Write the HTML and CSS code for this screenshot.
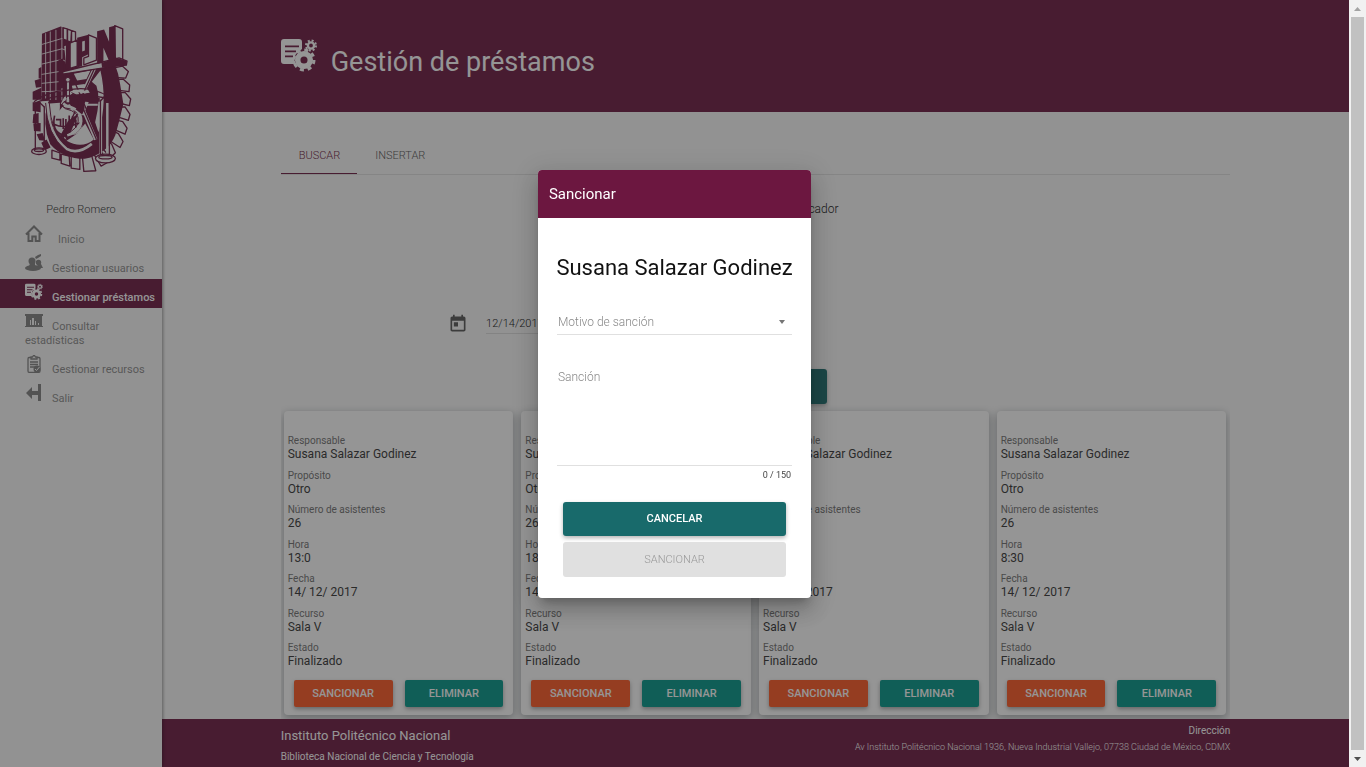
FILE: index.html
```html
<!DOCTYPE html>
<html lang="es">
<head>
<meta charset="utf-8">
<title>Gestión de préstamos</title>
<link rel="stylesheet" href="styles.css">
</head>
<body>
<svg width="0" height="0" class="defs" aria-hidden="true">
  <symbol id="manage" viewBox="0 0 36 34">
    <path fill="currentColor" fill-rule="evenodd" d="M3 0h15q3 0 3 3v7l-6 5-2 5 2 5H3q-3 0-3-3V3q0-3 3-3zM4 6.500v1.800h14V6.500zM4 11.500v1.800h11v-1.800zM4 16.500v1.800h8v-1.800z"/>
    <circle cx="23" cy="21" r="6.300" fill="none" stroke="currentColor" stroke-width="5.500"/>
    <circle cx="23" cy="21" r="10" fill="none" stroke="currentColor" stroke-width="3" stroke-dasharray="4 3.850"/>
    <circle cx="30" cy="6.500" r="3.100" fill="none" stroke="currentColor" stroke-width="2.400"/>
    <circle cx="30" cy="6.500" r="5" fill="none" stroke="currentColor" stroke-width="2" stroke-dasharray="2 1.930"/>
  </symbol>
</svg>
<div class="app">
  <aside class="sidebar">
    <svg class="logo" viewBox="90 70 310 450" role="img" aria-label="IPN">
      <g fill="#fafafa" stroke="currentColor" stroke-width="4" stroke-linejoin="round">
        <path d="M340 205l28-6 18 16-8 20-32-2zM346 240l24-2 20 18-2 20-30-4zM352 280l24-2 17 20-4 20-32-8zM350 322l26 0 15 22-5 18-32-10zM345 360l24 6 13 20-6 18-32-14zM334 392l22 10 14 24-9 18-28-18zM318 420l18 14 11 26-14 14-22-24z"/>
        <path d="M156 452l24 8 0 22-24-6zM184 464l24 6 2 30-26-8zM214 470l26 2 0 38-26-4zM248 474l28-4 12 44-36 2zM282 464l22-10 18 36-18 10z"/>
      </g>
      <path fill="currentColor" d="M116 206l8-4v34h-8zM104 242l20-6v26l-16 2zM98 276l26-12v36h-26zM98 308l24-2v32l-24-4zM100 344l16-4v32l-18-2zM100 372l22-2v26l-20-2zM110 404l18-4 8 24-18-2zM124 430l16-10 12 24-18 8z"/>
      <path fill="currentColor" d="M190 205L345 192q12 30 16 60l10 60-12 50-12 44q-22 56-92 72-66 0-104-44-26-60-7-124z"/>
      <g fill="#fafafa">
        <path d="M222 222l50-10-12 26-28 4zM302 212q22 94-6 186l-10-30q18-70 4-110l-14-12z"/>
        <path d="M216 258l38-5 16 26-48 6zM140 312l40-3v14q-8 55 20 98-46-28-60-109zM250 312h44v6h-44zM232 402l24-30 26 48q-36 30-82 4z"/>
        <path d="M190 318l20-4 12 20 20 16q18 40-16 55-40 8-66-20-4-40 20-54z"/>
      </g>
      <g fill="none">
        <path stroke="#fafafa" stroke-width="10" d="M284 206l-28 58M250 330l38 90M262 306l-16 40"/>
        <path stroke="currentColor" stroke-width="4" d="M215 225l76 176M284 206l-94 209M248 322l42 98"/>
        <path stroke="currentColor" stroke-width="5" d="M164 348q-10 46 24 58 44 6 62-38M164 375q20 10 50 3t34-12M168 360h14v20m8-24v32m8-30v24m10-34v40m10-38v24M228 360v24"/>
      </g>
      <path fill="currentColor" d="M178 415l26-50 32-24-28 68zM126 102l56-22 44 15v32l-33 12 7 72-14 90-62 4z"/>
      <path fill="none" stroke="#fafafa" stroke-width="2.500" d="M137 100v198M151 95v206M168 90v211M186 82v220M125 134l61-18 15 4M125 163l61-16 15 5M125 193l61-14 10 5M125 224l61-10M125 251l61-6M125 276l61-2"/>
      <g fill="#fafafa" stroke="currentColor" stroke-width="4" stroke-linejoin="round">
        <path d="M190 84l12 3 0 35-12-4zM203 88l12 4-2 35-10-4zM215 92l12 4 0 32-12 0z"/>
        <path d="M210 130l22-9v78l-22 7zM266 105l24 10v66l-38 14v-20l14-5zM345 77l24 10v94l-22 2z"/>
        <path d="M188 216l170-42 24 10-2 12-34 3-158 24z"/>
      </g>
      <path fill="currentColor" d="M198 132l14-5v78l-14 4zM232 114l34-9v58l-19 9v27l-15 4zM292 94l21-5 15 37V82l19-5v104l-18 5-18-42v45l-19 4z"/>
      <path fill="#fafafa" d="M247 125l8-2v29l-8 3z"/>
      <path fill="currentColor" d="M350 174l31 10v12l-34 4-40 4-2-14zM176 180l14-4v88l-14 4z"/>
      <g fill="none">
        <path stroke="#fafafa" stroke-width="8" d="M204 240v68M142 310q2 93 58 138 34 19 76-15M258 278q-40-14-62 17l-8 15 16 11q40 8 40 43-2 34-42 43M303 310v160M323 310v160"/>
        <path stroke="currentColor" stroke-width="3" d="M200 230v66M209 230v68M137 310q3 96 60 142M148 310q4 90 55 132M196 304q-18 10 0 23 44 10 39 38-1 22-35 38M180 316q16 12 32 12"/>
        <path stroke="currentColor" stroke-width="4" d="M102 306q40-31 98-34 70-16 125 18M108 309q50-22 96-20 60-6 116 6M106 320v132M133 320v135M302 300v166M329 300v168"/>
        <path stroke="currentColor" stroke-width="4" d="M106 322l12-14 15 14M302 304l13-14 15 16"/>
        <circle cx="204" cy="240" r="7" fill="#fafafa" stroke="currentColor" stroke-width="3"/>
      </g>
      <path fill="currentColor" d="M212 276q60 24 35 69l-20-16q22-20-15-53zM256 294h44v12h-44z"/>
      <g fill="#fafafa" stroke="currentColor" stroke-width="4">
        <ellipse cx="117" cy="455" rx="22" ry="10"/><ellipse cx="117" cy="452" rx="14" ry="4"/>
        <ellipse cx="317" cy="477" rx="30" ry="13"/><ellipse cx="317" cy="473" rx="20" ry="5"/>
      </g>
    </svg>
    <p class="user">Pedro Romero</p>
    <nav class="menu">
      <a class="home" href="#"><svg viewBox="0 0 18 18"><path fill="none" stroke="currentColor" stroke-width="2" d="M1 9.500L9 1.500l8 8M3.500 8v8h3.800v-4.500h3.400V16h3.800V8"/></svg>Inicio</a>
      <a href="#"><svg viewBox="0 0 18 18"><g fill="currentColor"><circle cx="7" cy="7" r="3.500"/><ellipse cx="8" cy="14" rx="8" ry="3"/><path d="M5 9h5v4H4z"/><circle cx="13.500" cy="8.500" r="2.700"/><path d="M12 10h4l2 4h-5zM10 3l3-2 3-1v2l-3 2-2 1z"/></g></svg>Gestionar usuarios</a>
      <a class="active" href="#"><svg viewBox="0 0 36 34"><use href="#manage"/></svg>Gestionar préstamos</a>
      <a href="#"><svg viewBox="0 0 18 18"><path fill="currentColor" fill-rule="evenodd" d="M0 2h18v2h-1v10h1v1H0v-1h1V4H0zM5 8v5h1V8zM7 6v7h2V6zM10 9v4h1V9zM13 11v2h1v-2z"/></svg>Consultar estadísticas</a>
      <a href="#"><svg viewBox="0 0 18 18"><path fill="none" stroke="currentColor" stroke-width="1.300" d="M6 2.500H4Q3 2.500 3 4v12q0 1.300 1 1.300h10q1 0 1-1.300V4q0-1.500-1-1.500h-2M6 4V2h1.500l1-1.500h1L10.500 2H12v2zM5 7h8M5 9.500h8M5 12h5"/><circle cx="12" cy="14" r="3.500" fill="currentColor"/><path fill="none" stroke="#fff" d="M10 14l1.500 1.500 3-3.500"/></svg>Gestionar recursos</a>
      <a href="#"><svg viewBox="0 0 18 18"><path fill="currentColor" d="M1 9l6-6v4h6v4H7v4zM13 0h3v17h-3z"/></svg>Salir</a>
    </nav>
  </aside>
  <div class="main">
    <header class="banner"><svg viewBox="0 0 36 34" aria-hidden="true"><use href="#manage"/></svg><h1>Gestión de préstamos</h1></header>
    <main class="content">
      <div class="tabs"><button class="tab selected" type="button">BUSCAR</button><button class="tab" type="button">INSERTAR</button></div>
      <p class="search-label">Identificador</p>
      <div class="date">
        <svg viewBox="0 0 24 24" aria-hidden="true"><path fill="currentColor" d="M19 3h-1V1h-2v2H8V1H6v2H5c-1.100 0-2 .9-2 2v14c0 1.100.9 2 2 2h14c1.100 0 2-.9 2-2V5c0-1.100-.9-2-2-2zm0 16H5V8h14v11zM7 10h5v5H7z"/></svg>
        <input type="text" value="12/14/2017" aria-label="Fecha">
      </div>
      <button class="find" type="button" aria-label="Buscar"></button>
      <div class="cards">
        <article class="card">
          <dl>
            <div><dt>Responsable</dt><dd>Susana Salazar Godinez</dd></div>
            <div><dt>Propósito</dt><dd>Otro</dd></div>
            <div><dt>Número de asistentes</dt><dd>26</dd></div>
            <div><dt>Hora</dt><dd>13:0</dd></div>
            <div><dt>Fecha</dt><dd>14/ 12/ 2017</dd></div>
            <div><dt>Recurso</dt><dd>Sala V</dd></div>
            <div><dt>Estado</dt><dd>Finalizado</dd></div>
          </dl>
          <div class="actions"><button class="orange" type="button">SANCIONAR</button><button class="teal" type="button">ELIMINAR</button></div>
        </article>
        <article class="card">
          <dl>
            <div><dt>Responsable</dt><dd>Susana Salazar Godinez</dd></div>
            <div><dt>Propósito</dt><dd>Otro</dd></div>
            <div><dt>Número de asistentes</dt><dd>26</dd></div>
            <div><dt>Hora</dt><dd>18</dd></div>
            <div><dt>Fecha</dt><dd>14/ 12/ 2017</dd></div>
            <div><dt>Recurso</dt><dd>Sala V</dd></div>
            <div><dt>Estado</dt><dd>Finalizado</dd></div>
          </dl>
          <div class="actions"><button class="orange" type="button">SANCIONAR</button><button class="teal" type="button">ELIMINAR</button></div>
        </article>
        <article class="card">
          <dl>
            <div><dt>Responsable</dt><dd>Susana Salazar Godinez</dd></div>
            <div><dt>Propósito</dt><dd>Otro</dd></div>
            <div><dt>Número de asistentes</dt><dd>26</dd></div>
            <div><dt>Hora</dt><dd>8:30</dd></div>
            <div><dt>Fecha</dt><dd>14/ 12/ 2017</dd></div>
            <div><dt>Recurso</dt><dd>Sala V</dd></div>
            <div><dt>Estado</dt><dd>Finalizado</dd></div>
          </dl>
          <div class="actions"><button class="orange" type="button">SANCIONAR</button><button class="teal" type="button">ELIMINAR</button></div>
        </article>
        <article class="card">
          <dl>
            <div><dt>Responsable</dt><dd>Susana Salazar Godinez</dd></div>
            <div><dt>Propósito</dt><dd>Otro</dd></div>
            <div><dt>Número de asistentes</dt><dd>26</dd></div>
            <div><dt>Hora</dt><dd>8:30</dd></div>
            <div><dt>Fecha</dt><dd>14/ 12/ 2017</dd></div>
            <div><dt>Recurso</dt><dd>Sala V</dd></div>
            <div><dt>Estado</dt><dd>Finalizado</dd></div>
          </dl>
          <div class="actions"><button class="orange" type="button">SANCIONAR</button><button class="teal" type="button">ELIMINAR</button></div>
        </article>
      </div>
    </main>
    <footer class="footer">
      <div><p class="school">Instituto Politécnico Nacional</p><p class="library">Biblioteca Nacional de Ciencia y Tecnología</p></div>
      <div class="address"><p class="heading">Dirección</p><p>Av Instituto Politécnico Nacional 1936, Nueva Industrial Vallejo, 07738 Ciudad de México, CDMX</p></div>
    </footer>
  </div>
  <div class="scrollbar" aria-hidden="true">
    <svg class="up" viewBox="0 0 17 17"><path d="M5 11h7L8.500 7z"/></svg>
    <div class="thumb"></div>
    <svg class="down" viewBox="0 0 17 17"><path d="M5 7h7l-3.500 4z"/></svg>
  </div>
</div>
<div class="backdrop">
  <form class="dialog" role="dialog" aria-labelledby="dialog-title">
    <h2 id="dialog-title">Sancionar</h2>
    <div class="dialog-body">
      <p class="person">Susana Salazar Godinez</p>
      <div class="select">
        <select aria-label="Motivo de sanción"><option>Motivo de sanción</option></select>
        <svg viewBox="0 0 8 4" aria-hidden="true"><path fill="#757575" d="M1 0h6L4 4z"/></svg>
      </div>
      <textarea placeholder="Sanción" aria-label="Sanción" maxlength="150"></textarea>
      <p class="counter">0 / 150</p>
      <div class="dialog-actions">
        <button class="cancel" type="button">CANCELAR</button>
        <button class="submit" type="submit" disabled>SANCIONAR</button>
      </div>
    </div>
  </form>
</div>
</body>
</html>
```
FILE: styles.css
```css
* { box-sizing: border-box; }
body, h1, h2, p, dl, dd { margin: 0; }
body {
  font-family: Roboto, "Liberation Sans", sans-serif;
  font-size: 12px;
  font-weight: 300;
  color: #111;
  background: #fafafa;
}
button, input, select, textarea { font: inherit; color: inherit; border: 0; border-radius: 0; background: none; padding: 0; margin: 0; }
button { cursor: pointer; }
.defs { display: block; }

.app { display: flex; height: 100vh; overflow: hidden; }

/* Sidebar */
.sidebar { width: 162px; flex: none; background: #fafafa; box-shadow: 1px 0 3px rgba(0,0,0,.4); z-index: 1; }
.logo { display: block; width: 103px; height: 150px; margin: 23px 0 0 30px; color: #6c1740; }
.user { margin-top: 29px; text-align: center; font-size: 11px; line-height: 16px; color: #333; }
.menu { margin-top: 3px; }
.menu a {
  display: block;
  padding: 4px 4px 3px 25px;
  font-size: 11px;
  font-weight: 400;
  line-height: 14px;
  color: #8a8a8a;
  text-decoration: none;
}
.menu svg { width: 18px; height: 18px; margin-right: 9px; vertical-align: baseline; color: #808080; }
.menu .home svg { margin-right: 15px; }
.menu .active { background: #6c1740; color: #fff; font-weight: 500; }
.menu .active svg { color: #fff; }

/* Main column */
.main { flex: 1; min-width: 0; display: flex; flex-direction: column; }
.banner {
  flex: none;
  height: 112px;
  padding: 0 10%;
  display: flex;
  align-items: center;
  gap: 14px;
  background: #6c1740;
  color: #fff;
}
.banner svg { width: 36px; height: 34px; margin-bottom: 1px; }
.banner h1 { font-size: 27px; font-weight: 400; line-height: 36px; padding-top: 12px; }
.content { flex: 1; padding: 24px 10% 0; }
.tabs { display: flex; border-bottom: 1px solid #e0e0e0; }
.tab { height: 38px; padding: 1px 17px 0 18px; font-size: 11px; color: #555; border-bottom: 1px solid transparent; }
.tab.selected { color: #6c1740; border-bottom-color: #6c1740; }
.search-label { width: 166px; margin: 26px auto 0; text-align: right; line-height: 16px; }
.date { display: flex; align-items: center; gap: 18px; margin-top: 97px; padding-left: 17%; }
.date svg { width: 20px; height: 20px; margin-left: 6px; color: #555; }
.date input { width: 120px; height: 20px; font-size: 11px; color: #111; border-bottom: 1px solid #ddd; }
.find {
  display: block;
  width: 143px;
  height: 35px;
  margin: 35px auto 0;
  border-radius: 3px;
  background: #186a6b;
  box-shadow: 0 2px 4px rgba(0,0,0,.3);
}
.cards { display: grid; grid-template-columns: repeat(4, 1fr); gap: 8px; padding: 7px 4px 4px 3px; overflow: hidden; }
.card { background: #fff; border-radius: 4px; box-shadow: 0 3px 9px 1px rgba(38,50,56,.35); }
.card dl { display: flex; flex-direction: column; justify-content: space-between; min-height: 234px; margin: 23px 4px 0; }
.card dt { font-size: 10px; line-height: 13px; font-weight: 400; color: #707070; }
.card dd { font-size: 12px; line-height: 14px; font-weight: 400; color: #333; }
.actions { display: grid; grid-template-columns: 1fr 1fr; gap: 12px; padding: 12px 10px 8px; }
.actions button { height: 27px; border-radius: 2px; font-size: 11px; font-weight: 500; box-shadow: 0 2px 4px rgba(0,0,0,.35); color: #fff; }
.orange { background: #ff5722; }
.teal { background: #009688; }

.footer {
  flex: none;
  display: flex;
  justify-content: space-between;
  height: 48px;
  padding: 0 10%;
  background: #6c1740;
  color: #fff;
}
.school { font-size: 13px; font-weight: 400; line-height: 16px; padding: 9px 0 5px; }
.library { font-size: 10px; font-weight: 400; line-height: 16px; }
.address { text-align: right; font-size: 9px; line-height: 16px; padding-top: 4px; }
.address .heading { font-size: 10px; font-weight: 400; }

/* Page scroll bar */
.scrollbar { width: 17px; flex: none; display: flex; flex-direction: column; align-items: center; background: #f1f1f1; }
.scrollbar svg { width: 17px; height: 17px; flex: none; }
.scrollbar .up { fill: #a3a3a3; }
.scrollbar .down { fill: #505050; }
.thumb { flex: 1; width: 13px; background: #c1c1c1; }

/* Dialog */
.backdrop {
  position: fixed;
  inset: 0 17px 0 0;
  z-index: 2;
  display: flex;
  align-items: center;
  justify-content: center;
  background: rgba(33,33,33,.48);
}
.dialog {
  width: 20vw;
  min-width: 273px;
  border-radius: 4px;
  overflow: hidden;
  background: #fff;
  box-shadow: 0 7px 8px -4px rgba(0,0,0,.2), 0 13px 19px 2px rgba(0,0,0,.14), 0 5px 24px 4px rgba(0,0,0,.12);
}
.dialog h2 { padding: 0 11px; font-size: 15px; font-weight: 400; line-height: 48px; color: #fff; background: #6c1740; }
.dialog-body { padding: 35px 19px 21px; }
.person { margin: 0 -10px; text-align: center; font-size: 22px; font-weight: 400; line-height: 30px; white-space: nowrap; }
.select { display: flex; align-items: center; height: 24px; margin-top: 28px; padding-right: 6px; border-bottom: 1px solid #e0e0e0; }
.select select { flex: 1; appearance: none; padding-left: 1px; font-size: 12px; color: #888; outline: 0; }
.select svg { width: 8px; height: 4px; }
.dialog textarea {
  display: block;
  width: 100%;
  height: 97px;
  margin-top: 34px;
  padding: 0 1px;
  font-size: 12px;
  line-height: 16px;
  border-bottom: 1px solid #e0e0e0;
  resize: none;
}
.dialog textarea::placeholder { color: #888; opacity: 1; }
.counter { padding: 2px 1px 0 0; text-align: right; font-size: 9px; font-weight: 400; line-height: 14px; color: #444; }
.dialog-actions { display: grid; gap: 6px; padding: 20px 6px 0; }
.dialog-actions button { border-radius: 3px; font-size: 11px; }
.dialog-actions .cancel { height: 34px; background: #186a6b; color: #fff; font-weight: 500; box-shadow: 0 2px 4px rgba(0,0,0,.3); }
.dialog-actions .submit { height: 35px; background: #e0e0e0; color: #999; }
```
